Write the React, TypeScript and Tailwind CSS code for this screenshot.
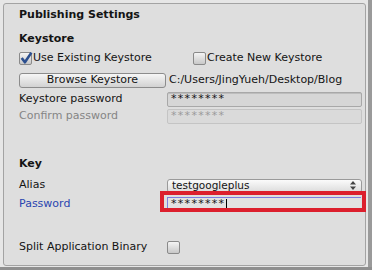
import React from 'react'

const font = { fontFamily: '"DejaVu Sans", Verdana, sans-serif' }

const Check = ({ checked }: { checked?: boolean }) => (
    <span className="relative inline-flex h-[13px] w-[13px] shrink-0 rounded-[2px] border border-[#8a8a8a] bg-gradient-to-b from-[#f4f4f4] to-[#c8c8c8]">
        {checked && (
            <svg viewBox="0 0 13 13" className="absolute -left-[1px] -top-[2px] h-[14px] w-[14px]">
                <path d="M2.5 6.5 L5.5 10.5 L11.5 1.5" fill="none" stroke="#2b4f8f" strokeWidth="2.4" strokeLinejoin="round" />
            </svg>
        )}
    </span>
)

const App = () => {
    return (
        <div className="relative flex h-[270px] w-[372px] overflow-hidden bg-[#e6e6e6] text-[11px] text-[#141414]" style={font}>
            {/* panel */}
            <div className="ml-[3px] mt-[3px] flex h-[263px] w-[363px] flex-col rounded-[3px] border border-[#a3a3a3] bg-[#dedede] pl-[15px]">
                <div className="mt-[4px] flex h-[14px] items-center font-bold">Publishing Settings</div>
                <div className="mt-[10px] flex h-[14px] items-center font-bold">Keystore</div>
                <div className="mt-[5px] flex h-[14px] items-center">
                    <div className="flex w-[174px] items-center gap-[1px]">
                        <Check checked />
                        <span>Use Existing Keystore</span>
                    </div>
                    <div className="flex items-center gap-[1px]">
                        <Check />
                        <span>Create New Keystore</span>
                    </div>
                </div>
                <div className="mt-[8px] flex h-[15px] items-center">
                    <div className="flex h-[15px] w-[147px] items-center justify-center rounded-[3px] border border-[#8c8c8c] bg-gradient-to-b from-[#f6f6f6] to-[#d2d2d2]">
                        Browse Keystore
                    </div>
                    <span className="ml-[3px] whitespace-nowrap">C:/Users/JingYueh/Desktop/Blog</span>
                </div>
                <div className="mt-[4px] flex h-[14px] items-center">
                    <span className="w-[148px]">Keystore password</span>
                    <div className="flex h-[15px] w-[195px] items-center rounded-[2px] border border-[#a8a8a8] bg-[#d6d6d6] pl-[3px] tracking-[1.3px] shadow-[inset_0_1px_0_#bdbdbd]">
                        ********
                    </div>
                </div>
                <div className="mt-[3px] flex h-[15px] items-center text-[#858585]">
                    <span className="w-[148px]">Confirm password</span>
                    <div className="flex h-[15px] w-[195px] items-center rounded-[2px] border border-[#c4c4c4] bg-[#dadada] pl-[3px] tracking-[1.3px] text-[#9a9a9a]">
                        ********
                    </div>
                </div>
                <div className="mt-[33px] flex h-[14px] items-center font-bold">Key</div>
                <div className="mt-[8px] flex h-[13px] items-center">
                    <span className="w-[148px]">Alias</span>
                    <div className="flex h-[14px] w-[195px] items-center justify-between rounded-[3px] border border-[#9a9a9a] bg-gradient-to-b from-[#fbfbfb] to-[#dcdcdc] pl-[4px] pr-[5px] text-[10.5px]">
                        <span>testgoogleplus</span>
                        <svg viewBox="0 0 6 9" className="h-[9px] w-[6px]">
                            <path d="M3 0 L6 3.5 H0 Z M3 9 L6 5.5 H0 Z" fill="#444" />
                        </svg>
                    </div>
                </div>
                <div className="mt-[5px] flex h-[14px] items-center">
                    <span className="w-[148px] text-[#2a45b0]">Password</span>
                    <div className="flex h-[14px] w-[194px] items-center border-t border-l border-[#7d7de0] border-b-[#c9c9c9] bg-[#e2e2e2] pl-[3px] tracking-[1.3px]">
                        <span>********</span>
                        <span className="ml-[1px] h-[12px] w-[1px] bg-black" />
                    </div>
                </div>
                <div className="mt-[29px] flex h-[14px] items-center">
                    <span className="w-[148px]">Split Application Binary</span>
                    <Check />
                </div>
            </div>
            {/* window edge */}
            <div className="ml-[2px] h-full w-[4px] bg-[#9a9a9a]" />
            <div className="absolute bottom-0 left-0 h-[3px] w-full bg-[#8f8f8f]" />
            {/* annotation box */}
            <div className="absolute left-[160px] top-[191px] h-[21px] w-[206px] border-[4px] border-[#dc1f2d]" />
        </div>
    )
}

export default App
